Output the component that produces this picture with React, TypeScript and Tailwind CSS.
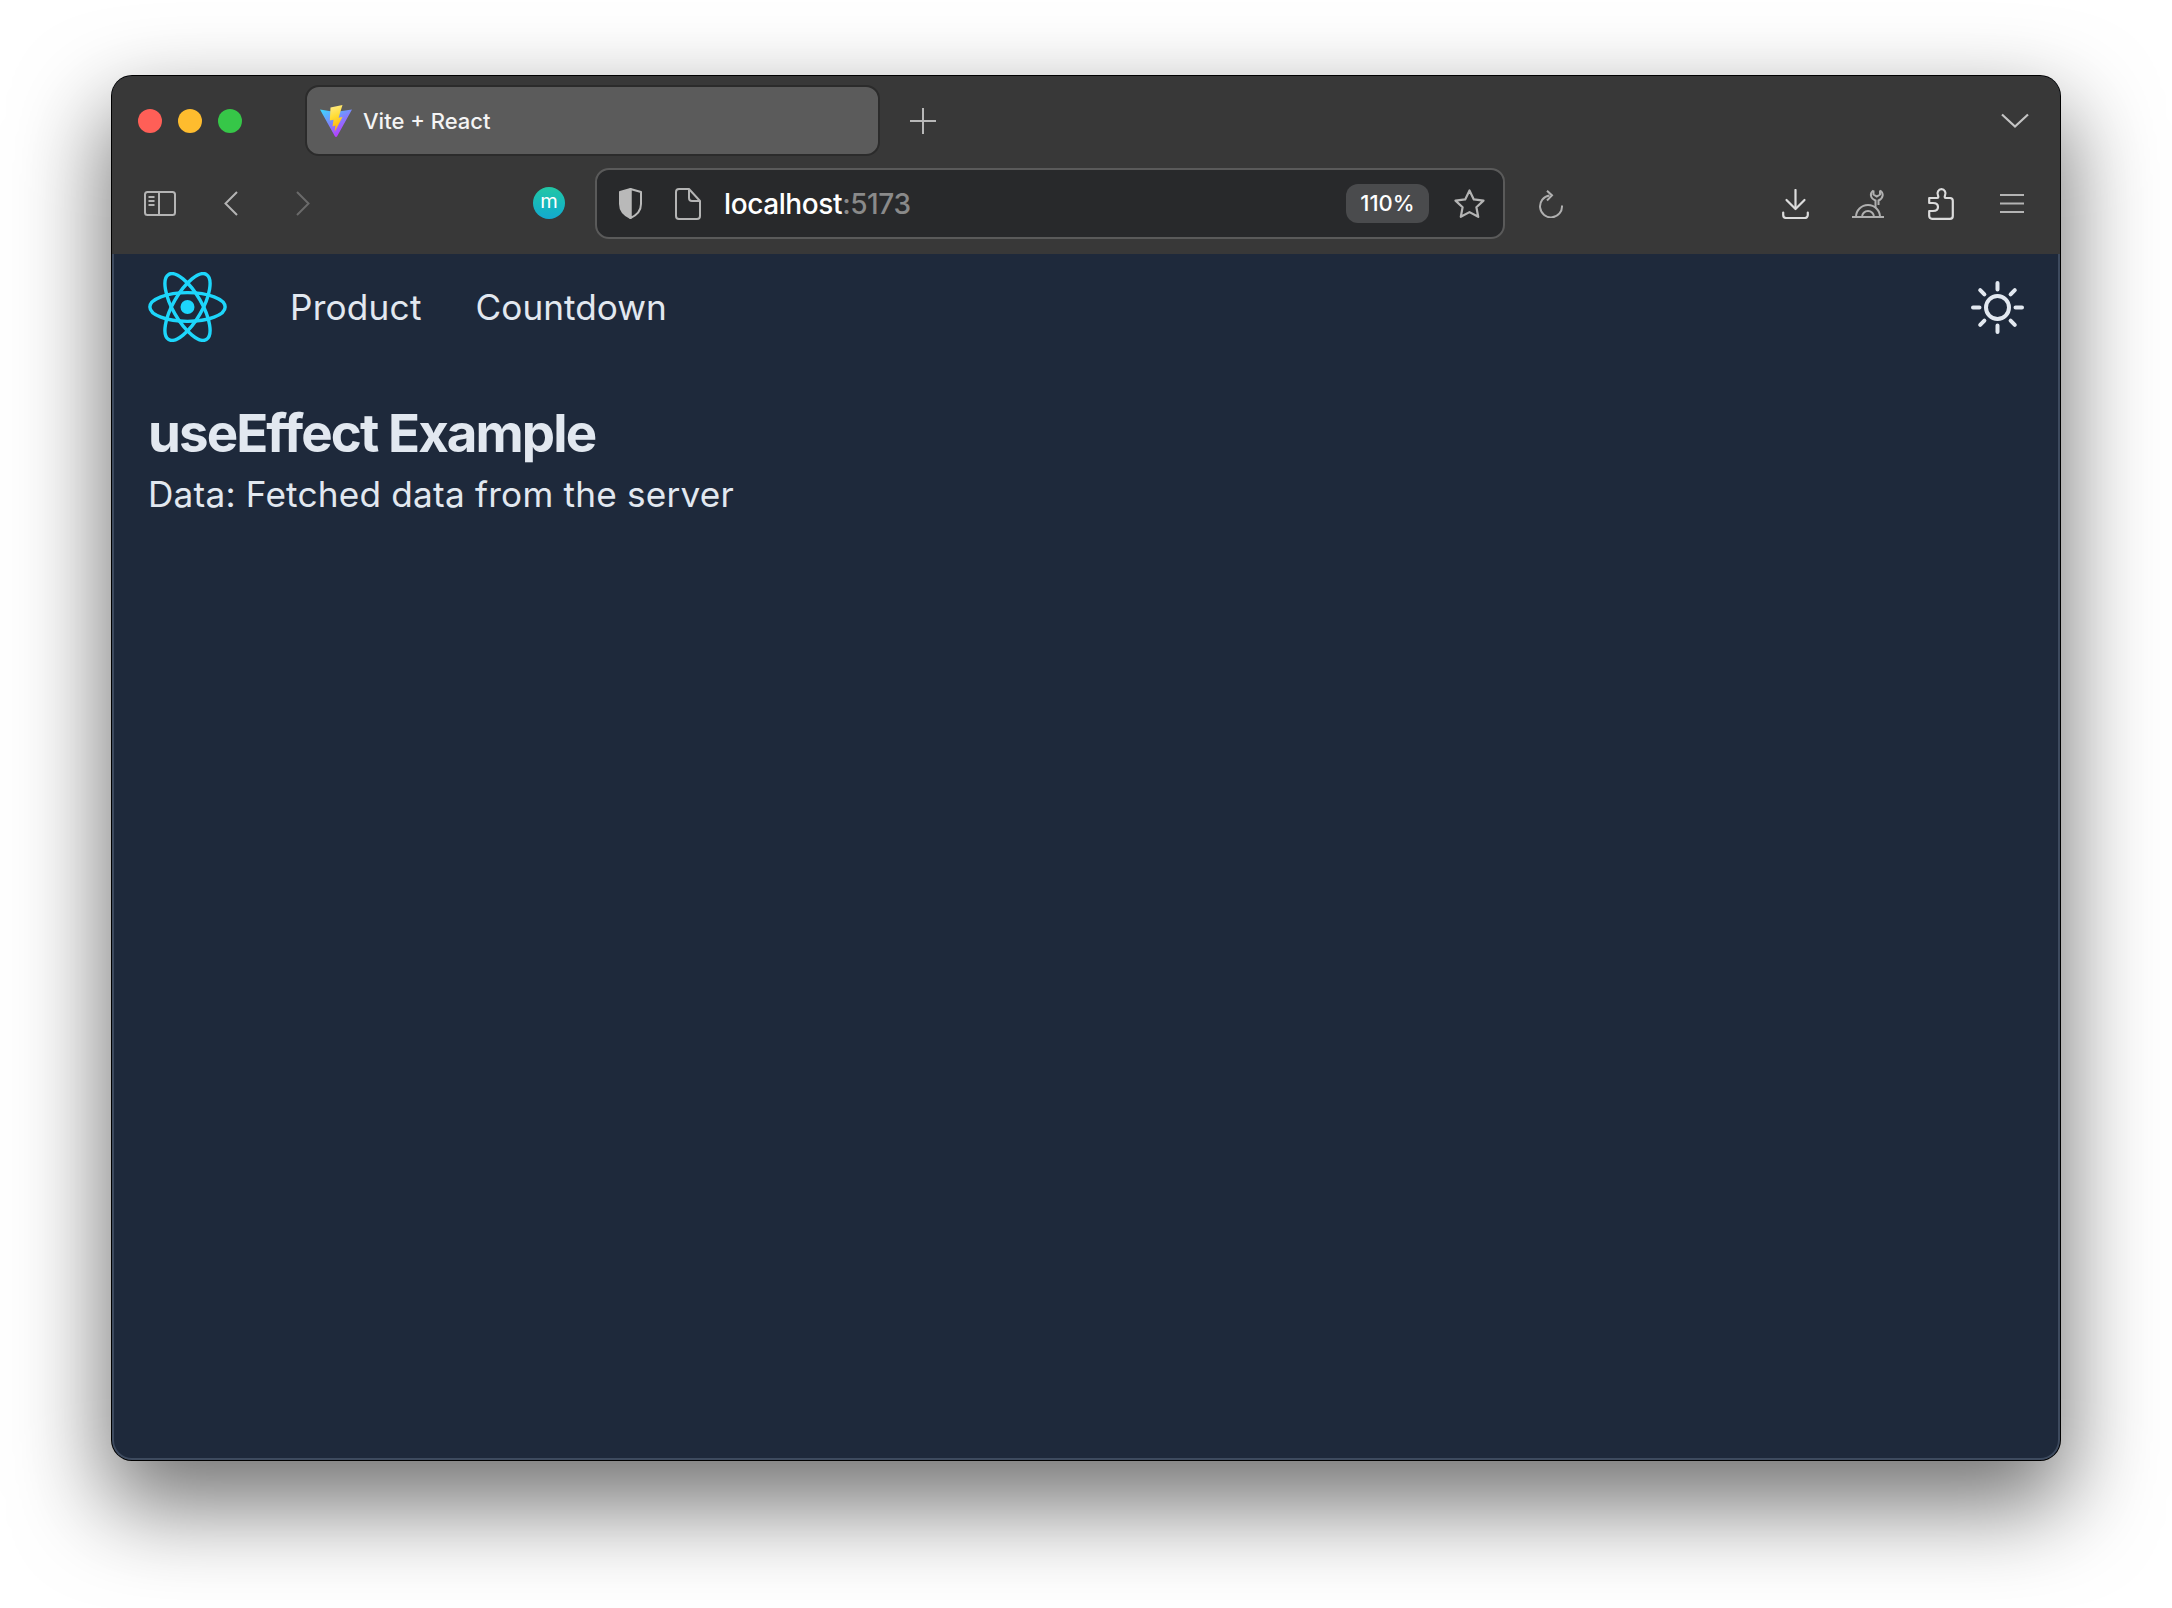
const ui = { fontFamily: "Inter, 'Noto Sans', sans-serif" };

function ViteLogo() {
  return (
    <svg width="32" height="32" viewBox="0 0 32 32">
      <defs>
        <linearGradient id="viteA" x1="0" y1="0.1" x2="0.6" y2="1">
          <stop offset="0" stopColor="#41d1ff" />
          <stop offset="1" stopColor="#bd34fe" />
        </linearGradient>
        <linearGradient id="viteB" x1="0.4" y1="0" x2="0.6" y2="1">
          <stop offset="0" stopColor="#ffea83" />
          <stop offset="0.4" stopColor="#ffdd35" />
          <stop offset="1" stopColor="#ffa800" />
        </linearGradient>
      </defs>
      <path d="M0 4.5 L15.2 7 L32 4.5 L17 31.5 Q16 32.4 15 31.5 Z" fill="url(#viteA)" />
      <path d="M22.5 0 L10.5 2.4 L9.8 15.5 L13.5 14.8 L12.5 21.5 L15.5 20.5 L14.6 27 L22.5 12 L18.6 12.8 L20 8 Z" fill="url(#viteB)" />
    </svg>
  );
}

function SidebarIcon() {
  return (
    <svg width="32" height="25" viewBox="0 0 32 25" fill="none" stroke="#b4b4b4" strokeWidth="2">
      <rect x="1" y="1" width="30" height="23" rx="2.5" />
      <path d="M15 1v23" />
      <path d="M4.5 6h6M4.5 10h6M4.5 14h6" />
    </svg>
  );
}

function Chevron({ dir, color }: { dir: "left" | "right"; color: string }) {
  return (
    <svg width="14" height="25" viewBox="0 0 14 25" fill="none" stroke={color} strokeWidth="2">
      <path d={dir === "left" ? "M13 1 L1.5 12.5 L13 24" : "M1 1 L12.5 12.5 L1 24"} />
    </svg>
  );
}

function ShieldIcon() {
  return (
    <svg width="23" height="31" viewBox="0 0 23 31">
      <path d="M11.5 1 L1 4 V16 C1 23 6 27.5 11.5 30 Z" fill="#b9b9b9" />
      <path d="M11.5 1 L22 4 V16 C22 23 17 27.5 11.5 30 Z" fill="none" stroke="#b9b9b9" strokeWidth="2" strokeLinejoin="round" />
      <path d="M1 4 L11.5 1 V30 C6 27.5 1 23 1 16 Z" fill="none" stroke="#b9b9b9" strokeWidth="2" strokeLinejoin="round" />
    </svg>
  );
}

function FileIcon() {
  return (
    <svg width="26" height="32" viewBox="0 0 26 32" fill="none" stroke="#b4b4b4" strokeWidth="2" strokeLinejoin="round">
      <path d="M4 1 H14 L25 13 V28 A3 3 0 0 1 22 31 H4 A3 3 0 0 1 1 28 V4 A3 3 0 0 1 4 1 Z" />
      <path d="M14 1 V10 A3 3 0 0 0 17 13 H25" />
    </svg>
  );
}

function StarIcon() {
  return (
    <svg width="31" height="29" viewBox="0 0 31 29" fill="none" stroke="#b4b4b4" strokeWidth="2.2" strokeLinejoin="round">
      <path d="M15.5 1.5 L19.8 10.4 L29.5 11.6 L22.4 18.3 L24.2 27.8 L15.5 23.1 L6.8 27.8 L8.6 18.3 L1.5 11.6 L11.2 10.4 Z" />
    </svg>
  );
}

function ReloadIcon() {
  return (
    <svg width="26" height="28" viewBox="0 0 26 28" fill="none" stroke="#b0b0b0" strokeWidth="2">
      <path d="M11.5 5.5 A11 11 0 1 0 24 15.5" />
      <path d="M9 0.8 L14 5.4 L9 10.5" />
    </svg>
  );
}

function DownloadIcon() {
  return (
    <svg width="27" height="30" viewBox="0 0 27 30" fill="none" stroke="#dcdcdc" strokeWidth="2.2" strokeLinecap="round" strokeLinejoin="round">
      <path d="M13.5 1 V19" />
      <path d="M4.5 11 L13.5 20 L22.5 11" />
      <path d="M1.2 23.5 V26 A3 3 0 0 0 4.2 29 H22.8 A3 3 0 0 0 25.8 26 V23.5" />
    </svg>
  );
}

function WrenchIcon() {
  return (
    <svg width="32" height="29" viewBox="0 0 32 29" fill="none" stroke="#b0b0b0" strokeWidth="2">
      <path d="M0 28 H32" />
      <path d="M4 28 A12 12 0 0 1 28 28" />
      <path d="M10 28 A6 6 0 0 1 22 28" />
      <path d="M21.5 1.5 C17.5 4 18 9.5 23.5 11.5 V19" />
      <path d="M28 1.5 C32 4 31.5 9.5 26.5 11.5 V16" />
      <path d="M21.5 1.5 V5.5 L24.8 7.5 L28 5.5 V1.5" />
    </svg>
  );
}

function PuzzleIcon() {
  return (
    <svg width="26" height="32" viewBox="0 0 26 32" fill="none" stroke="#dcdcdc" strokeWidth="2.2" strokeLinejoin="round">
      <path d="M1.2 10 H9 C10.5 10 10.5 8.5 10 7.5 C8.5 4.5 10.5 1.2 13.5 1.2 C16.5 1.2 18.5 4.5 17 7.5 C16.5 8.5 16.5 10 18 10 H22 A2.8 2.8 0 0 1 24.8 12.8 V28 A2.8 2.8 0 0 1 22 30.8 H4 A2.8 2.8 0 0 1 1.2 28 V23 H5 C9 23 10 20.5 10 19 C10 17.5 9 15 5 15 H1.2 Z" />
    </svg>
  );
}

function MenuIcon() {
  return (
    <svg width="24" height="19" viewBox="0 0 24 19" fill="none" stroke="#b4b4b4" strokeWidth="1.8">
      <path d="M0 1h24M0 9.5h24M0 18h24" />
    </svg>
  );
}

function ReactLogo() {
  return (
    <svg width="79" height="70" viewBox="-11.5 -10.23 23 20.46" fill="none" stroke="#1dd6fb" strokeWidth="1">
      <circle r="2.05" fill="#1dd6fb" stroke="none" />
      <ellipse rx="11" ry="4.2" />
      <ellipse rx="11" ry="4.2" transform="rotate(60)" />
      <ellipse rx="11" ry="4.2" transform="rotate(120)" />
    </svg>
  );
}

function SunIcon() {
  return (
    <svg width="53" height="53" viewBox="0 0 53 53" fill="none" stroke="#e2e8f0" strokeWidth="4" strokeLinecap="round">
      <circle cx="26.5" cy="26.5" r="11.5" />
      <path d="M26.5 2v6.5M26.5 44.5V51M2 26.5h6.5M44.5 26.5H51M9.2 9.2l4.2 4.2M39.6 39.6l4.2 4.2M9.2 43.8l4.2-4.2M39.6 13.4l4.2-4.2" />
    </svg>
  );
}

export default function App() {
  return (
    <div className="w-[2172px] h-[1608px] bg-white pt-[76px] pl-[112px] overflow-hidden" style={ui}>
      <div className="w-[1948px] h-[1384px] rounded-[20px] overflow-hidden flex flex-col bg-[#1e293b] ring-1 ring-black shadow-[0_40px_90px_6px_rgba(0,0,0,0.55)]">
        {/* browser chrome */}
        <div className="h-[178px] bg-[#383838] shrink-0">
          <div className="h-[89px] flex items-center">
            <div className="ml-[26px] flex gap-4">
              <div className="w-6 h-6 rounded-full bg-[#ff5f57]" />
              <div className="w-6 h-6 rounded-full bg-[#febc2e]" />
              <div className="w-6 h-6 rounded-full bg-[#36c748]" />
            </div>
            <div className="ml-[63px] w-[575px] h-[71px] rounded-[14px] bg-[#5b5b5b] border-2 border-[#2b2b2b] flex items-center pl-[13px]">
              <ViteLogo />
              <span className="ml-[11px] mt-[2px] text-[22px] font-medium text-[#f4f4f4]">Vite + React</span>
            </div>
            <svg className="ml-[30px] mt-[1px]" width="26" height="26" viewBox="0 0 26 26" stroke="#b8b8b8" strokeWidth="2">
              <path d="M0 13h26M13 0v26" />
            </svg>
            <svg className="ml-auto mr-[31px]" width="28" height="15" viewBox="0 0 28 15" fill="none" stroke="#c4c4c4" strokeWidth="2.2">
              <path d="M1 1.5 L14 13.5 L27 1.5" />
            </svg>
          </div>
          <div className="h-[89px] pt-[3px] pb-[15px] flex items-center">
            <div className="ml-[32px] flex"><SidebarIcon /></div>
            <div className="ml-[48px] flex"><Chevron dir="left" color="#b4b4b4" /></div>
            <div className="ml-[58px] flex"><Chevron dir="right" color="#6a6a6a" /></div>
            <div className="ml-[223px] -mt-[2px] w-8 h-8 rounded-full bg-gradient-to-b from-[#22c7a4] to-[#14a9cf] flex items-center justify-center text-[20px] leading-none pb-[3px] text-white">m</div>
            <div className="ml-[30px] w-[910px] h-[71px] rounded-[14px] bg-[#28292b] border-2 border-[#5a5a5a] flex items-center pl-[22px] pr-[18px]">
              <ShieldIcon />
              <div className="ml-[33px] flex"><FileIcon /></div>
              <span className="ml-[23px] text-[28px] font-[450] tracking-[-0.4px] text-white">localhost<span className="text-[#8a8a8a]">:5173</span></span>
              <div className="ml-auto w-[83px] h-[39px] rounded-[12px] bg-[#4a4b4d] flex items-center justify-center text-[22px] font-medium text-white">110%</div>
              <div className="ml-[25px] flex"><StarIcon /></div>
            </div>
            <div className="ml-[33px] flex"><ReloadIcon /></div>
            <div className="ml-[218px] flex"><DownloadIcon /></div>
            <div className="ml-[43px] flex"><WrenchIcon /></div>
            <div className="ml-[44px] flex"><PuzzleIcon /></div>
            <div className="ml-[46px] flex"><MenuIcon /></div>
          </div>
        </div>

        {/* page */}
        <div className="flex-1 bg-[#1e293b] text-[#e2e8f0] border-2 border-t-0 border-[#3d4a5e] rounded-b-[20px]">
          <nav className="flex items-center pl-[34px] pr-[34px] pt-[18px]">
            <ReactLogo />
            <a className="ml-[63px] text-[35.2px] tracking-[0.2px]">Product</a>
            <a className="ml-[54px] text-[35.2px]">Countdown</a>
            <div className="ml-auto flex"><SunIcon /></div>
          </nav>
          <main className="pl-[34px] pt-[52px]">
            <h1 className="text-[52.8px] font-[650] leading-[79px] tracking-[-1.9px]">useEffect Example</h1>
            <p className="text-[35.2px] leading-[53px] -mt-[5px] tracking-[0.2px]">Data: Fetched data from the server</p>
          </main>
        </div>
      </div>
    </div>
  );
}
